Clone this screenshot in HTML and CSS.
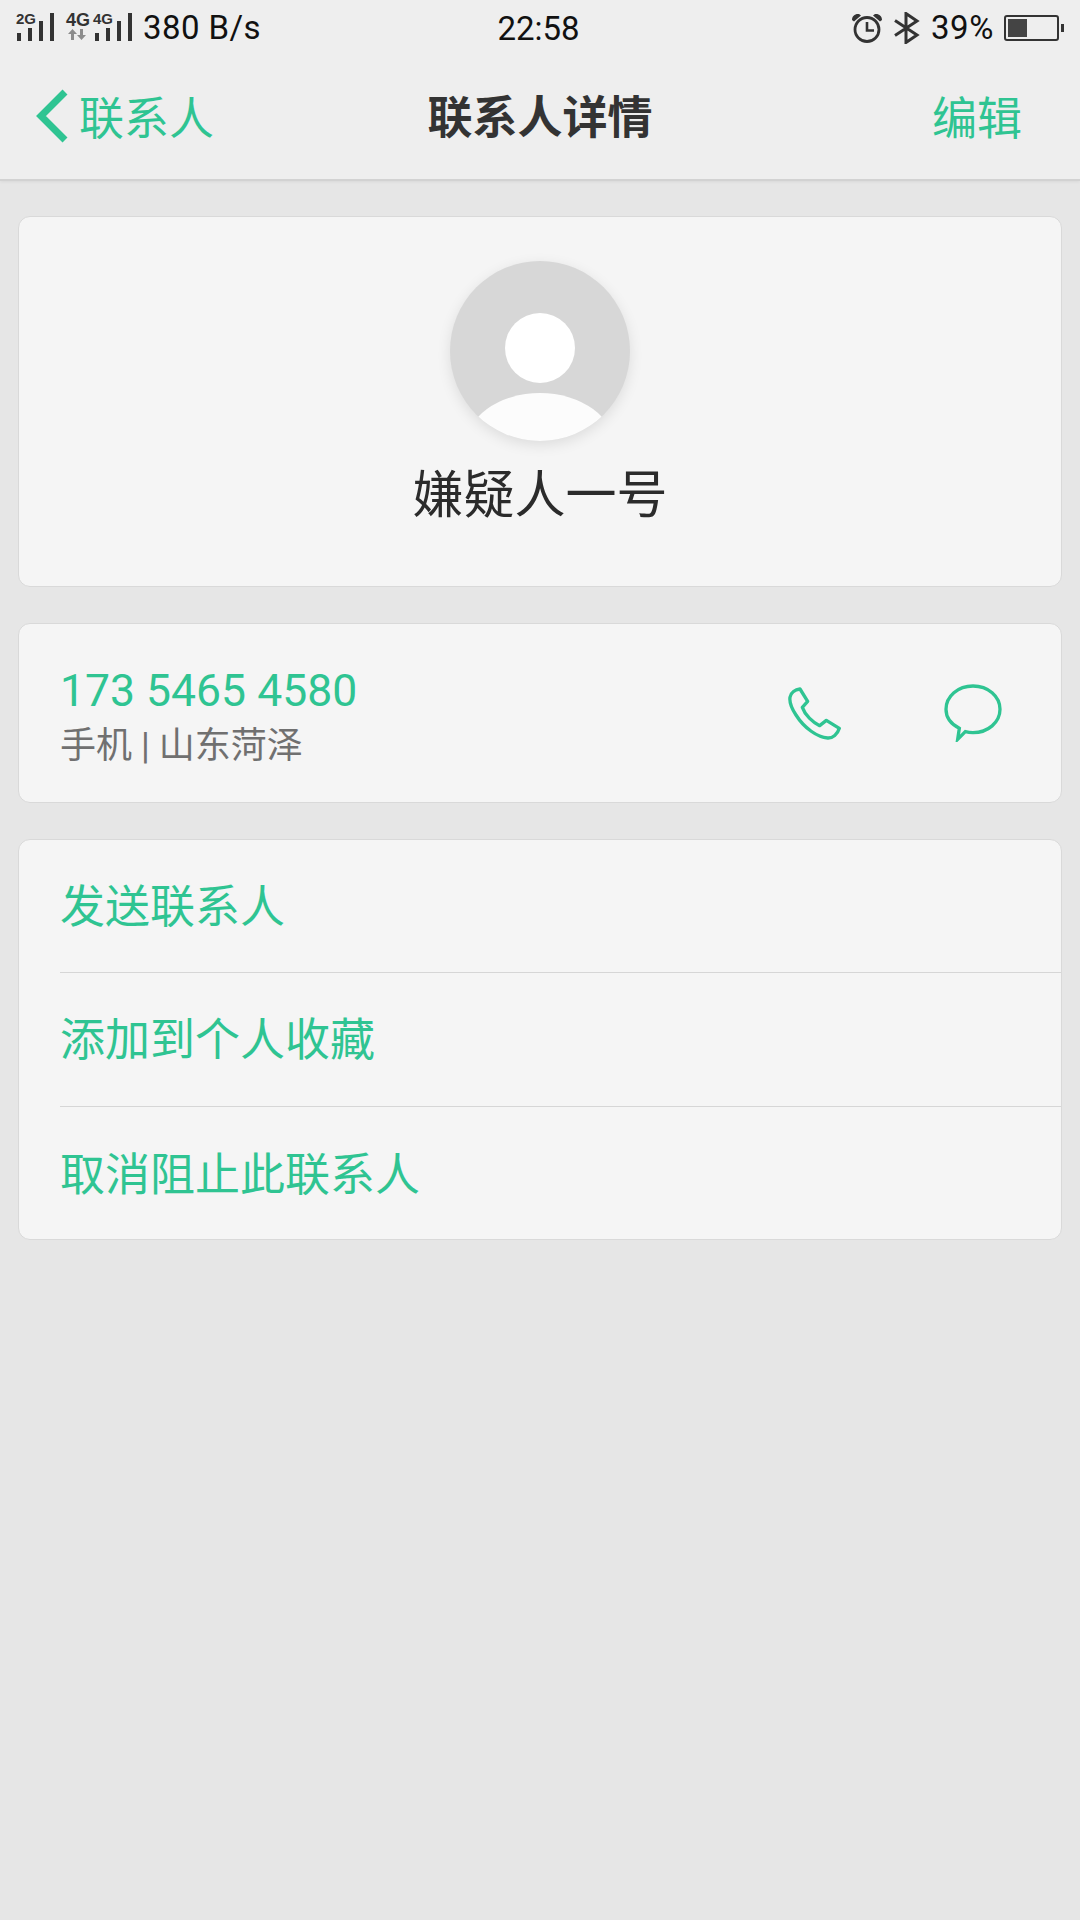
FILE: index.html
```html
<!DOCTYPE html>
<html lang="zh-CN">
<head>
<meta charset="utf-8">
<title>联系人详情</title>
<link rel="stylesheet" href="styles.css">
</head>
<body>
<header class="top">
  <div class="status">
    <div class="status-left">
      <div class="sig">
        <span class="sig-label">2G</span>
        <svg width="40" height="28" viewBox="0 0 40 28"><path fill="#333" d="M1 20h4v8H1zM12 15h4v13h-4zM23 8h4v20h-4zM34 0h4v28h-4z"/></svg>
      </div>
      <div class="sig sig2">
        <span class="sig-label big">4G</span>
        <svg class="arrows" width="20" height="11" viewBox="0 0 20 11"><path fill="#8c8c8c" d="M4.500 0 9 5H6v6H3V5H0zM12 0h3v6h3l-4.500 5L9 6h3z"/></svg>
      </div>
      <div class="sig">
        <span class="sig-label shifted">4G</span>
        <svg width="40" height="28" viewBox="0 0 40 28"><path fill="#333" d="M1 20h4v8H1zM12 15h4v13h-4zM23 8h4v20h-4zM34 0h4v28h-4z"/></svg>
      </div>
      <span class="speed">380 B/s</span>
    </div>
    <span class="clock">22:58</span>
    <div class="status-right">
      <svg class="alarm" width="32" height="30" viewBox="0 0 32 30"><circle cx="16" cy="16.500" r="12" fill="none" stroke="#333" stroke-width="2.800"/><path fill="none" stroke="#333" stroke-width="2.600" d="M16 9v8.500h7"/><path fill="#333" d="M1 7c0-4 3-6.500 7-6l2 1.500L3 8.500zM31 7c0-4-3-6.500-7-6l-2 1.500 7 6z"/></svg>
      <svg class="bt" width="26" height="32" viewBox="0 0 26 32"><path fill="none" stroke="#333" stroke-width="3" d="M1 8.500 23 23 12 30.500V1.500L23 9 1 23.500"/></svg>
      <span class="pct">39%</span>
      <div class="battery"><div class="battery-fill"></div></div>
      <div class="battery-tip"></div>
    </div>
  </div>
  <nav class="nav">
    <div class="back">
      <svg class="chevron" width="32" height="54" viewBox="0 0 32 54"><path fill="none" stroke="#2fc492" stroke-width="7" d="M29 3 5 27l24 24"/></svg>
      <span>联系人</span>
    </div>
    <h1 class="title">联系人详情</h1>
    <span class="edit">编辑</span>
  </nav>
</header>
<main class="content">
  <section class="card profile">
    <div class="avatar">
      <div class="head"></div>
      <div class="body"></div>
    </div>
    <div class="name">嫌疑人一号</div>
  </section>
  <section class="card phone">
    <div class="phone-text">
      <div class="number">173 5465 4580</div>
      <div class="sub">手机 | 山东菏泽</div>
    </div>
    <div class="actions">
      <svg width="54" height="54" viewBox="78 78 162 162"><path fill="none" stroke="#2fc492" stroke-width="10" stroke-linejoin="round" d="M117 87 140 124 124 142C132 165 155 187 176 197L196 181 235 205C230 222 215 235 200 234 170 232 130 205 105 165 92 145 85 125 87 112 89 98 103 89 117 87Z"/></svg>
      <svg width="58" height="58" viewBox="549 72 174 174"><path fill="none" stroke="#2fc492" stroke-width="10" d="M636 78C681 78 717 109 717 148S681 218 636 218C628 218 620 217 613 215L590 238 595 205C571 193 555 172 555 148 555 109 591 78 636 78Z"/></svg>
    </div>
  </section>
  <section class="card list">
    <div class="row">发送联系人</div>
    <div class="row">添加到个人收藏</div>
    <div class="row">取消阻止此联系人</div>
  </section>
</main>
</body>
</html>
```

FILE: styles.css
```css
* { box-sizing: border-box; }
html, body { margin: 0; padding: 0; }
body {
  width: 1080px;
  height: 1920px;
  background: #e6e6e6;
  font-family: Roboto, "Noto Sans CJK SC", sans-serif;
  overflow: hidden;
}
.top {
  height: 181px;
  background: #eeeeee;
  border-bottom: 2px solid #d2d2d2;
  box-shadow: 0 1px 3px rgba(0,0,0,.06);
}
.status {
  height: 56px;
  padding: 0 16px;
  display: grid;
  grid-template-columns: 1fr auto 1fr;
  align-items: center;
  color: #111;
}
.status-left { display: flex; align-items: center; height: 56px; }
.sig { position: relative; width: 40px; height: 28px; margin-top: -2px; }
.sig svg { display: block; }
.sig2 { width: 28px; margin-left: 10px; }
.sig-label {
  position: absolute;
  left: 0;
  top: -2px;
  font: bold 15px/15px "Liberation Sans", sans-serif;
  color: #333;
}
.big { font-size: 18px; line-height: 18px; }
.shifted { left: -1px; }
.arrows { position: absolute; left: 2px; top: 16px; }
.speed { font-size: 33px; line-height: 40px; margin-left: 9px; letter-spacing: .4px; }
.clock { font-size: 33px; line-height: 40px; margin: 2px 3px 0 0; }
.status-right { display: flex; justify-content: flex-end; align-items: center; }
.alarm { margin-right: 11px; }
.bt { margin-right: 11px; }
.pct { font-size: 33px; line-height: 40px; margin-right: 10px; letter-spacing: .6px; }
.battery {
  width: 55px;
  height: 26px;
  border: 2px solid #333;
  border-radius: 3px;
  padding: 2px;
}
.battery-fill { width: 19px; height: 100%; background: #444; }
.battery-tip { width: 3px; height: 8px; background: #333; margin-left: 2px; }
.nav {
  height: 123px;
  padding: 0 36px 5px;
  display: grid;
  grid-template-columns: 1fr auto 1fr;
  align-items: center;
}
.back { display: flex; align-items: center; gap: 11px; color: #2fc492; font-size: 45px; }
.chevron { margin-top: 2px; }
.title { margin: 8px 0 0; font-size: 45px; font-weight: 700; color: #333; line-height: 60px; }
.edit { justify-self: end; margin-right: 22px; color: #2fc492; font-size: 45px; }
.content {
  padding: 35px 18px 0;
  display: flex;
  flex-direction: column;
  gap: 36px;
}
.card {
  background: #f5f5f5;
  border: 1px solid #d9d9d9;
  border-radius: 12px;
}
.profile {
  height: 371px;
  display: flex;
  flex-direction: column;
  align-items: center;
  padding-top: 44px;
}
.avatar {
  position: relative;
  flex: none;
  width: 180px;
  height: 180px;
  border-radius: 50%;
  background: #d7d7d7;
  overflow: hidden;
  box-shadow: 0 4px 14px rgba(0,0,0,.1);
}
.head {
  position: absolute;
  left: 55px;
  top: 52px;
  width: 70px;
  height: 70px;
  border-radius: 50%;
  background: #fff;
}
.body {
  position: absolute;
  left: 15px;
  top: 132px;
  width: 150px;
  height: 110px;
  border-radius: 50%;
  background: #fcfcfc;
}
.name { margin-top: 21px; font-size: 51px; line-height: 68px; color: #2b2b2b; }
.phone {
  height: 180px;
  padding: 0 59px 0 41px;
  display: flex;
  justify-content: space-between;
  align-items: center;
}
.phone-text { display: flex; flex-direction: column; margin-top: 7px; }
.number { font-size: 44.500px; line-height: 54px; color: #2fc492; }
.sub { font-size: 36px; line-height: 48px; color: #707070; margin-top: 4px; }
.actions { display: flex; align-items: center; gap: 103px; }
.actions svg { display: block; }
.list { height: 401px; }
.row {
  height: 134px;
  margin-left: 41px;
  padding-bottom: 6px;
  display: flex;
  align-items: center;
  color: #2fc492;
  font-size: 45px;
  border-bottom: 1px solid #d6d6d6;
}
.row:first-child { height: 133px; }
.row:last-child { border-bottom: 0; }
```
